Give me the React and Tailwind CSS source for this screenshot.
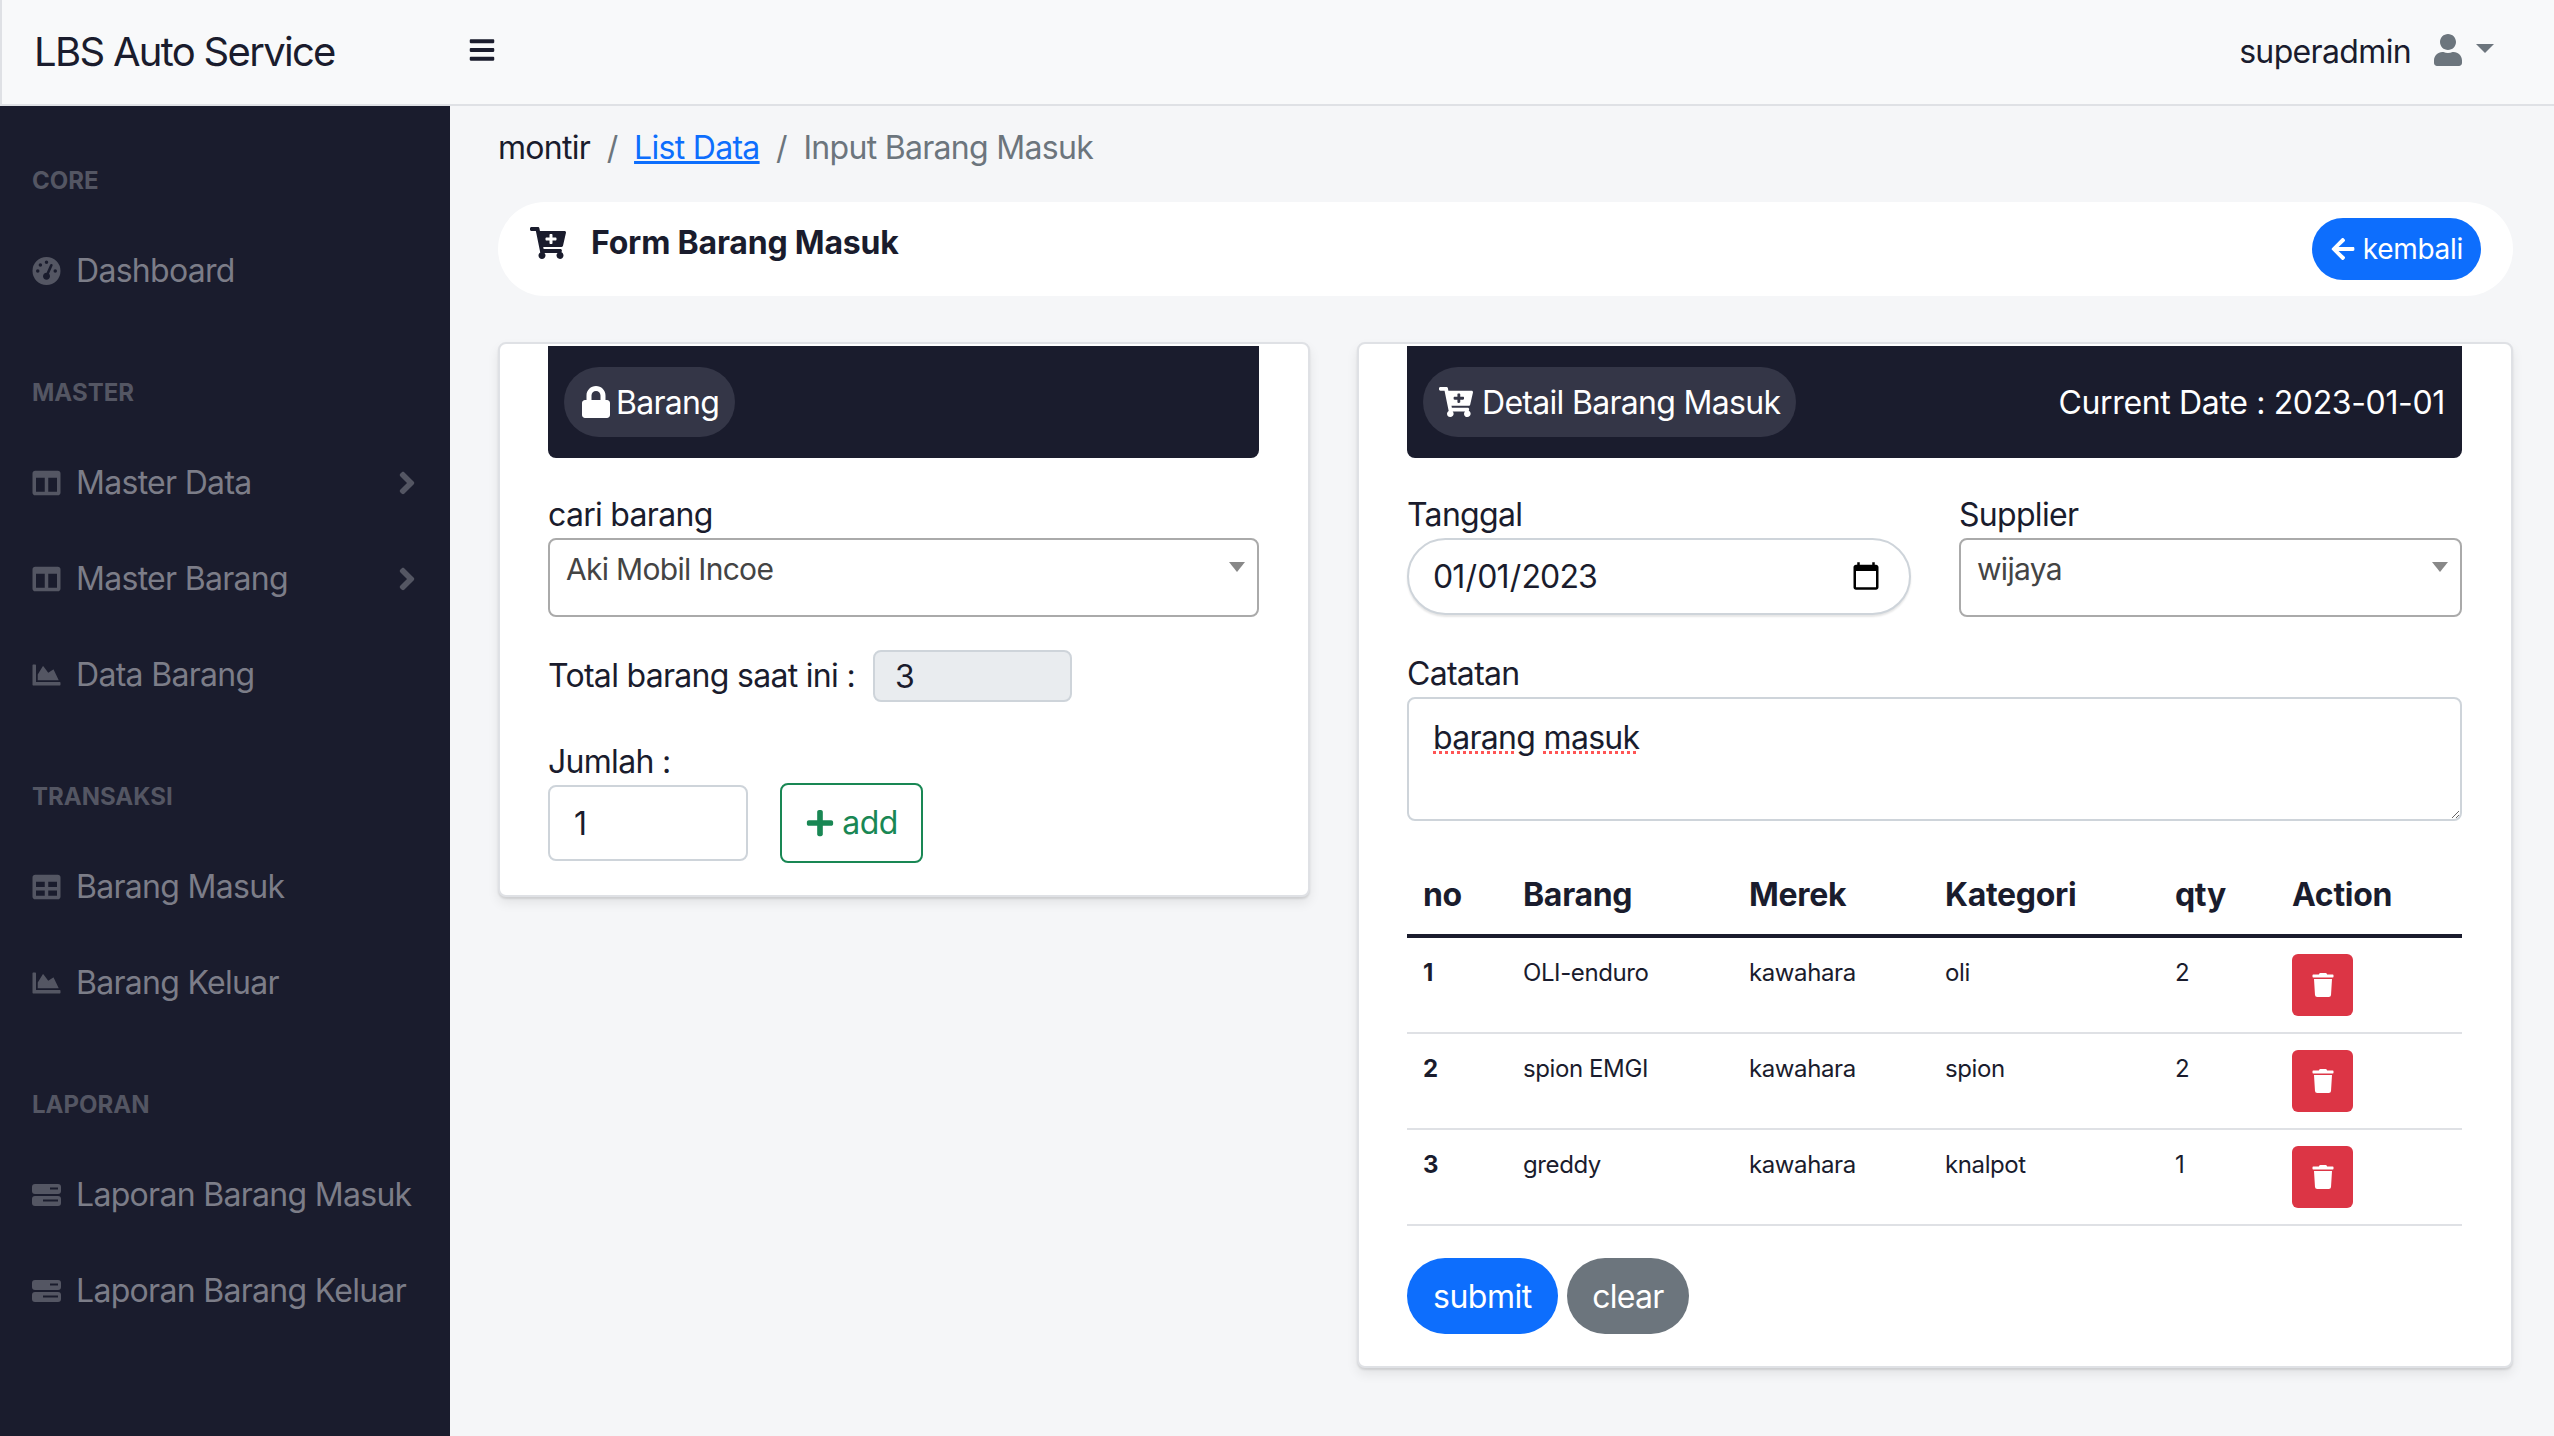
import React from 'react';
import {
  FaAngleRight,
  FaArrowLeft,
  FaBars,
  FaCartPlus,
  FaChartArea,
  FaColumns,
  FaLock,
  FaPlus,
  FaTable,
  FaTrash,
  FaUser,
} from 'react-icons/fa';
import { FaGaugeHigh } from 'react-icons/fa6';

// dua bar bertumpuk, tidak ada yang pas di icon pack
function ReportIcon({ className }) {
  return (
    <svg viewBox="0 0 29 22" className={className} fill="currentColor">
      <rect x="0" y="0" width="29" height="10" rx="3" />
      <rect x="0" y="12" width="29" height="10" rx="3" />
      <rect x="18" y="3.5" width="8" height="2" fill="#1a1c2d" />
      <rect x="11" y="15.5" width="15" height="2" fill="#1a1c2d" />
    </svg>
  );
}

const menu = [
  {
    heading: 'CORE',
    items: [{ label: 'Dashboard', icon: FaGaugeHigh }],
  },
  {
    heading: 'MASTER',
    items: [
      { label: 'Master Data', icon: FaColumns, arrow: true },
      { label: 'Master Barang', icon: FaColumns, arrow: true },
      { label: 'Data Barang', icon: FaChartArea },
    ],
  },
  {
    heading: 'TRANSAKSI',
    items: [
      { label: 'Barang Masuk', icon: FaTable },
      { label: 'Barang Keluar', icon: FaChartArea },
    ],
  },
  {
    heading: 'LAPORAN',
    items: [
      { label: 'Laporan Barang Masuk', icon: ReportIcon },
      { label: 'Laporan Barang Keluar', icon: ReportIcon },
    ],
  },
];

const rows = [
  { no: 1, barang: 'OLI-enduro', merek: 'kawahara', kategori: 'oli', qty: 2 },
  { no: 2, barang: 'spion EMGI', merek: 'kawahara', kategori: 'spion', qty: 2 },
  { no: 3, barang: 'greddy', merek: 'kawahara', kategori: 'knalpot', qty: 1 },
];

function Sidebar() {
  return (
    <aside className="w-[450px] shrink-0 bg-[#1a1c2d] pt-[1px]">
      {menu.map((section) => (
        <div key={section.heading} className="pt-[53px]">
          <div className="mb-[21px] h-[42px] pl-[32px] text-[24px] leading-[42px] font-bold text-[#545663]">
            {section.heading}
          </div>
          {section.items.map((item) => (
            <div key={item.label} className="flex h-[96px] items-center px-[32px] text-[#7c7d88]">
              <item.icon className="mr-[15px] w-[29px] shrink-0 text-[28px] text-[#545663]" />
              <span className="whitespace-nowrap text-[32px] tracking-[-0.7px]">{item.label}</span>
              {item.arrow && <FaAngleRight className="-mr-[7px] ml-auto text-[36px] text-[#545663]" />}
            </div>
          ))}
        </div>
      ))}
    </aside>
  );
}

function DarkHeader({ icon: Icon, iconClass, pillClass, title, children }) {
  return (
    <div className="flex h-[112px] items-center justify-between rounded-b-[8px] bg-[#1a1c2d] pl-[16px] pr-[17px] text-white">
      <div className={`flex h-[70px] items-center rounded-full bg-[#343647] pl-[16px] pr-[16px] ${pillClass}`}>
        <Icon className={iconClass} />
        <span className="pt-[2px] text-[32px] tracking-[-0.7px]">{title}</span>
      </div>
      {children}
    </div>
  );
}

function SelectBox({ value }) {
  return (
    <div className="relative h-[79px] rounded-[8px] border-2 border-[#aaaaaa] bg-white">
      <div className="pl-[16px] pt-[7px] text-[30px] leading-[44px] tracking-[-0.7px] text-[#444444]">{value}</div>
      <div className="absolute right-[12px] top-[22px] h-0 w-0 border-x-[8px] border-t-[10px] border-x-transparent border-t-[#888888]" />
    </div>
  );
}

export default function App() {
  return (
    <div
      className="flex h-[1436px] w-[2554px] flex-col overflow-hidden bg-[#f5f6f8] text-[#1a1c2d]"
      style={{ fontFamily: 'Inter, "Noto Sans", sans-serif' }}
    >
      <nav className="flex h-[106px] shrink-0 items-center border-b-2 border-l-2 border-[#dfe1e5] bg-[#f8f9fa]">
        <div className="w-[466px] pl-[32px] text-[40px] tracking-[-1.7px]">LBS Auto Service</div>
        <FaBars className="mb-[4px] text-[28px]" />
        <div className="ml-auto flex items-center pr-[60px]">
          <span className="text-[32px] tracking-[-0.65px]">superadmin</span>
          <FaUser className="mb-[4px] ml-[21px] text-[32px] text-[#6c757d]" />
          <div className="mb-[8px] ml-[12px] h-0 w-0 border-x-[9px] border-t-[9px] border-x-transparent border-t-[#6c757d]" />
        </div>
      </nav>

      <div className="flex min-h-0 flex-1">
        <Sidebar />

        <main className="flex-1 pl-[48px] pr-[41px]">
          <div className="flex h-[96px] items-center gap-[16.5px] pb-[13px] text-[32px] tracking-[-0.7px]">
            <span>montir</span>
            <span className="text-[#6c757d]">/</span>
            <a className="text-[#0d6efd] underline">List Data</a>
            <span className="text-[#6c757d]">/</span>
            <span className="text-[#6c757d]">Input Barang Masuk</span>
          </div>

          <div className="flex h-[94px] items-center justify-between rounded-[47px] bg-white px-[32px]">
            <div className="flex items-center gap-[25px] pb-[12px]">
              <FaCartPlus className="text-[36px]" />
              <span className="text-[32px] font-bold tracking-[-0.2px]">Form Barang Masuk</span>
            </div>
            <button className="flex h-[62px] items-center gap-[7px] rounded-full bg-[#0d6efd] px-[18px] text-[28px] tracking-[-0.3px] text-white">
              <FaArrowLeft className="text-[26px]" />
              kembali
            </button>
          </div>

          <div className="mt-[46px] grid grid-cols-[812px_1156px] items-start gap-[47px]">
            {/* kiri */}
            <section className="rounded-[8px] border-2 border-[#dfe1e5] bg-white pb-[32px] pl-[48px] pr-[49px] pt-[2px] shadow-[0_2px_2px_rgba(0,0,0,0.1),0_6px_12px_rgba(0,0,0,0.08)]">
              <DarkHeader icon={FaLock} iconClass="text-[32px]" pillClass="gap-[4px]" title="Barang" />
              <div className="mt-[32px] pt-[2px] text-[32px] leading-[46px] tracking-[-0.7px]">cari barang</div>
              <SelectBox value="Aki Mobil Incoe" />
              <div className="mt-[33px] flex items-center gap-[18px]">
                <span className="text-[32px] leading-[52px] tracking-[-0.7px]">Total barang saat ini :</span>
                <input
                  readOnly
                  value="3"
                  className="h-[52px] w-[199px] rounded-[8px] border-2 border-[#ced4da] bg-[#e9ecef] px-[20px] text-[32px] outline-none"
                />
              </div>
              <div className="mt-[38px] text-[32px] leading-[43px] tracking-[-0.7px]">Jumlah :</div>
              <div className="flex items-center gap-[32px]">
                <input
                  readOnly
                  value="1"
                  className="h-[76px] w-[200px] rounded-[8px] border-2 border-[#ced4da] bg-white px-[24px] text-[32px] outline-none"
                />
                <button className="flex h-[80px] w-[143px] items-center justify-center gap-[7px] rounded-[8px] border-2 border-[#198754] text-[32px] tracking-[-0.5px] text-[#198754]">
                  <FaPlus className="text-[30px]" />
                  add
                </button>
              </div>
            </section>

            {/* kanan */}
            <section className="rounded-[8px] border-2 border-[#dfe1e5] bg-white pb-[32px] pl-[48px] pr-[49px] pt-[2px] shadow-[0_2px_2px_rgba(0,0,0,0.1),0_6px_12px_rgba(0,0,0,0.08)]">
              <DarkHeader icon={FaCartPlus} iconClass="text-[34px]" pillClass="gap-[9px]" title="Detail Barang Masuk">
                <span className="pt-[2px] text-[32px] tracking-[-0.35px]">Current Date : 2023-01-01</span>
              </DarkHeader>

              <div className="mt-[32px] grid grid-cols-[504px_503px] gap-[48px]">
                <div>
                  <div className="pt-[2px] text-[32px] leading-[46px] tracking-[-0.7px]">Tanggal</div>
                  <input
                    type="date"
                    defaultValue="2023-01-01"
                    className="h-[77px] w-full rounded-full border-2 border-[#ced4da] bg-white pl-[23px] pr-[25px] text-[32px] tracking-[-0.85px] shadow-[0_2px_2px_rgba(0,0,0,0.1)] outline-none"
                  />
                </div>
                <div>
                  <div className="pt-[2px] text-[32px] leading-[46px] tracking-[-0.7px]">Supplier</div>
                  <SelectBox value="wijaya" />
                </div>
              </div>

              <div className="mt-[32px] pt-[2px] text-[32px] leading-[46px] tracking-[-0.7px]">Catatan</div>
              <div className="h-[124px] resize-y overflow-auto rounded-[8px] border-2 border-[#ced4da] bg-white px-[24px] pb-[9px] pt-[15px] text-[32px] leading-[48px] tracking-[-0.7px]">
                <span className="underline decoration-[#f55] decoration-dotted decoration-[3px]">barang</span>{' '}
                <span className="underline decoration-[#f55] decoration-dotted decoration-[3px]">masuk</span>
              </div>

              <table className="mt-[32px] w-full table-fixed border-collapse">
                <colgroup>
                  <col className="w-[100px]" />
                  <col className="w-[226px]" />
                  <col className="w-[196px]" />
                  <col className="w-[231px]" />
                  <col className="w-[116px]" />
                  <col className="w-[186px]" />
                </colgroup>
                <thead>
                  <tr className="h-[83px] border-b-4 border-[#1a1c2d] text-left text-[32px] tracking-[-0.3px]">
                    <th className="px-[16px] pt-[2px] font-bold">no</th>
                    <th className="px-[16px] pt-[2px] font-bold">Barang</th>
                    <th className="px-[16px] pt-[2px] font-bold">Merek</th>
                    <th className="px-[16px] pt-[2px] font-bold">Kategori</th>
                    <th className="px-[15px] pt-[2px] font-bold">qty</th>
                    <th className="px-[16px] pt-[2px] font-bold">Action</th>
                  </tr>
                </thead>
                <tbody>
                  {rows.map((row) => (
                    <tr key={row.no} className="border-b-2 border-[#dfe1e5] text-[24px] leading-[36px] tracking-[-0.4px]">
                      <td className="px-[16px] pb-[16px] pt-[17px] align-top font-bold">{row.no}</td>
                      <td className="px-[16px] pb-[16px] pt-[17px] align-top">{row.barang}</td>
                      <td className="px-[16px] pb-[16px] pt-[17px] align-top">{row.merek}</td>
                      <td className="px-[16px] pb-[16px] pt-[17px] align-top">{row.kategori}</td>
                      <td className="px-[15px] pb-[16px] pt-[17px] align-top">{row.qty}</td>
                      <td className="p-[16px] align-top">
                        <button className="flex h-[62px] w-[61px] items-center justify-center rounded-[6px] bg-[#dc3545] text-white">
                          <FaTrash className="text-[24px]" />
                        </button>
                      </td>
                    </tr>
                  ))}
                </tbody>
              </table>

              <div className="mt-[32px] flex gap-[9px]">
                <button className="h-[76px] rounded-full bg-[#0d6efd] px-[26px] pt-[2px] text-[32px] tracking-[-0.5px] text-white">submit</button>
                <button className="h-[76px] rounded-full bg-[#6c757d] px-[25.5px] pt-[2px] text-[32px] tracking-[-0.7px] text-white">clear</button>
              </div>
            </section>
          </div>
        </main>
      </div>
    </div>
  );
}
